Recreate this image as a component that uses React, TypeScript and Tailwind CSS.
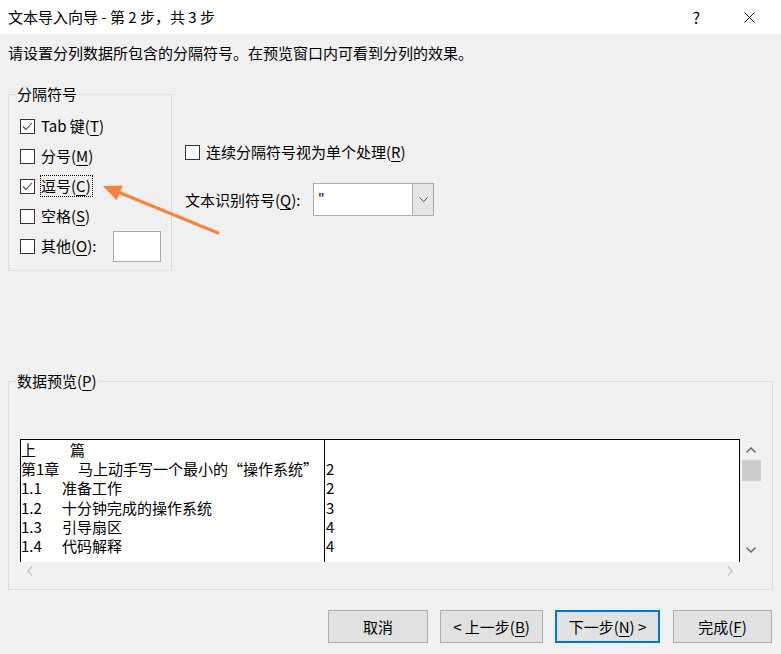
import type { ReactNode } from 'react';

const CheckBox = ({ checked }: { checked?: boolean }) => (
  <span className="flex h-[15px] w-[15px] shrink-0 items-center justify-center border border-[#333] bg-white">
    {checked && (
      <svg width="13" height="13" viewBox="0 0 13 13">
        <path d="M2 6.5 L5 9.5 L11 3" fill="none" stroke="#444" strokeWidth="1.1" />
      </svg>
    )}
  </span>
);

const Key = ({ children }: { children: ReactNode }) => (
  <u className="underline-offset-[3px] decoration-1">{children}</u>
);

const OptionRow = ({ checked, children }: { checked?: boolean; children: ReactNode }) => (
  <div className="flex h-[30px] items-center gap-[6px] pl-[11px]">
    <CheckBox checked={checked} />
    {children}
  </div>
);

const previewRows = [
  { head: '上', body: '篇', headW: 'w-[49px]', page: '' },
  { head: '第1章', body: '马上动手写一个最小的“操作系统”', headW: 'w-[57px]', page: '2' },
  { head: '1.1', body: '准备工作', headW: 'w-[41px]', page: '2' },
  { head: '1.2', body: '十分钟完成的操作系统', headW: 'w-[41px]', page: '3' },
  { head: '1.3', body: '引导扇区', headW: 'w-[41px]', page: '4' },
  { head: '1.4', body: '代码解释', headW: 'w-[41px]', page: '4' },
];

export default function App() {
  return (
    <div className="relative h-[654px] w-[781px] overflow-hidden bg-[#f0f0f0] font-['Noto_Sans_CJK_SC',sans-serif] text-[15px] leading-[20px] text-black">
      {/* title bar */}
      <div className="flex h-[34px] items-center bg-white pl-[8px]">
        <span className="flex-1">文本导入向导 - 第 2 步，共 3 步</span>
        <span className="mr-[44px] text-[16px]">?</span>
        <svg width="11" height="11" viewBox="0 0 11 11" className="mr-[26px]">
          <path d="M0.5 0.5 L10.5 10.5 M10.5 0.5 L0.5 10.5" stroke="#111" strokeWidth="1" />
        </svg>
      </div>

      <div className="px-[8px]">
        <p className="pt-[9px]">请设置分列数据所包含的分隔符号。在预览窗口内可看到分列的效果。</p>

        <div className="mt-[31px] flex">
          {/* delimiter group */}
          <div className="h-[177px] w-[164px] border border-[#dcdcdc]">
            <div className="-mt-[11px] ml-[7px] w-fit bg-[#f0f0f0] px-[1px]">分隔符号</div>
            <div className="mt-[7px]">
              <OptionRow checked>
                <span>
                  Tab 键(<Key>T</Key>)
                </span>
              </OptionRow>
              <OptionRow>
                <span>
                  分号(<Key>M</Key>)
                </span>
              </OptionRow>
              <OptionRow checked>
                <span className="-ml-[1px] border border-dotted border-black pr-[1px]">
                  逗号(<Key>C</Key>)
                </span>
              </OptionRow>
              <OptionRow>
                <span>
                  空格(<Key>S</Key>)
                </span>
              </OptionRow>
              <OptionRow>
                <span>
                  其他(<Key>O</Key>):
                </span>
                <span className="ml-[11px] h-[31px] w-[48px] border border-[#a8a8a8] bg-white" />
              </OptionRow>
            </div>
          </div>

          {/* right options */}
          <div className="ml-[13px]">
            <div className="mt-[48px] flex h-[20px] items-center gap-[6px]">
              <CheckBox />
              <span>
                连续分隔符号视为单个处理(<Key>R</Key>)
              </span>
            </div>
            <div className="mt-[21px] flex items-center">
              <span className="w-[128px]">
                文本识别符号(<Key>Q</Key>):
              </span>
              <div className="flex h-[33px] w-[121px] border border-[#acacac] bg-white">
                <span className="flex-1 pl-[4px] pt-[4px] text-[14px]">"</span>
                <span className="flex w-[21px] items-center justify-center border-l border-[#acacac] bg-[#e5e5e5]">
                  <svg width="9" height="6" viewBox="0 0 9 6">
                    <path d="M0.5 0.5 L4.5 4.5 L8.5 0.5" fill="none" stroke="#555" strokeWidth="1" />
                  </svg>
                </span>
              </div>
            </div>
          </div>
        </div>

        {/* data preview group */}
        <div className="mt-[110px] h-[209px] w-[765px] border border-[#dcdcdc]">
          <div className="-mt-[11px] ml-[7px] w-fit bg-[#f0f0f0] px-[1px]">
            数据预览(<Key>P</Key>)
          </div>
          <div className="ml-[11px] mt-[48px] flex">
            <div className="w-[720px]">
              <div className="flex h-[123px] border-l border-r border-t border-black bg-white">
                <div className="w-[304px] border-r border-black leading-[19.2px]">
                  {previewRows.map((r) => (
                    <div key={r.head} className="flex">
                      <span className={r.headW}>{r.head}</span>
                      <span>{r.body}</span>
                    </div>
                  ))}
                </div>
                <div className="flex-1 pl-[1px] leading-[19.2px]">
                  {previewRows.map((r) => (
                    <div key={r.head} className="h-[19.2px]">
                      {r.page}
                    </div>
                  ))}
                </div>
              </div>
              <div className="flex h-[18px] items-center justify-between px-[7px]">
                <svg width="6" height="10" viewBox="0 0 6 10">
                  <path d="M5 0.5 L1 5 L5 9.5" fill="none" stroke="#c4c4c4" strokeWidth="1.3" />
                </svg>
                <svg width="6" height="10" viewBox="0 0 6 10">
                  <path d="M1 0.5 L5 5 L1 9.5" fill="none" stroke="#c4c4c4" strokeWidth="1.3" />
                </svg>
              </div>
            </div>
            <div className="flex h-[123px] w-[21px] flex-col items-center">
              <div className="flex h-[21px] items-center justify-center">
                <svg width="10" height="6" viewBox="0 0 10 6">
                  <path d="M0.5 5.5 L5 1 L9.5 5.5" fill="none" stroke="#606060" strokeWidth="1.4" />
                </svg>
              </div>
              <div className="ml-[1px] h-[21px] w-[19px] bg-[#cdcdcd]" />
              <div className="flex-1" />
              <div className="mb-[2px] flex h-[21px] items-center justify-center">
                <svg width="10" height="6" viewBox="0 0 10 6">
                  <path d="M0.5 0.5 L5 5 L9.5 0.5" fill="none" stroke="#606060" strokeWidth="1.4" />
                </svg>
              </div>
            </div>
          </div>
        </div>
      </div>

      {/* buttons */}
      <div className="mt-[20px] flex justify-end gap-[12px] pr-[9px]">
        <button className="h-[33px] w-[100px] border border-[#adadad] bg-[#e1e1e1]">取消</button>
        <button className="h-[33px] w-[103px] border border-[#adadad] bg-[#e1e1e1]">
          &lt; 上一步(<Key>B</Key>)
        </button>
        <button className="h-[33px] w-[105px] border-2 border-[#0078d7] bg-[#e1e1e1]">
          下一步(<Key>N</Key>) &gt;
        </button>
        <button className="ml-[1px] h-[33px] w-[99px] border border-[#adadad] bg-[#e1e1e1]">
          完成(<Key>F</Key>)
        </button>
      </div>

      {/* orange annotation arrow */}
      <svg className="pointer-events-none absolute left-0 top-0" width="781" height="654">
        <line x1="218" y1="233" x2="112" y2="189.5" stroke="#f5843a" strokeWidth="3" strokeLinecap="round" />
        <path d="M103 186 L122.7 185.4 L116.7 200.2 Z" fill="#f5843a" />
      </svg>
    </div>
  );
}
